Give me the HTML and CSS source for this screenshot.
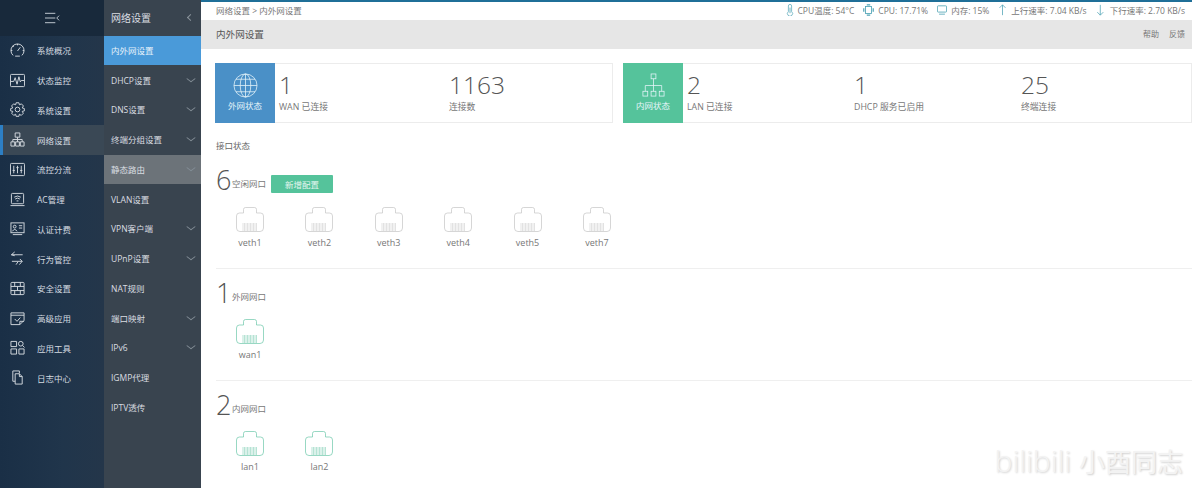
FILE: index.html
```html
<!DOCTYPE html>
<html lang="zh">
<head>
<meta charset="utf-8">
<title>内外网设置</title>
<link rel="stylesheet" href="styles.css">
</head>
<body>
<svg class="defs" width="0" height="0" aria-hidden="true">
  <symbol id="port" viewBox="0 0 28 25">
    <path d="M7.500 6V2.500Q7.500 .5 9.500 .5H18.500Q20.500 .5 20.500 2.500V6H24.500Q27.500 6 27.500 9V21Q27.500 24.500 24 24.500H4Q.5 24.500 .5 21V9Q.5 6 3.500 6Z" fill="none" stroke="currentColor" stroke-width=".7"/>
    <path d="M7 16V24M8.500 16V24M10 16V24M11.500 16V24M13 16V24M14.500 16V24M16 16V24M17.500 16V24M19 16V24M20.500 16V24" stroke="currentColor" stroke-width=".5"/>
  </symbol>
</svg>
<div class="app">
  <nav class="rail">
    <div class="rail-head">
      <svg class="burger" viewBox="0 0 16 12"><path d="M0 1H11M0 6H11M0 11H11M15 3.500L12.500 6L15 8.500" fill="none" stroke="currentColor"/></svg>
    </div>
    <a class="rail-item"><svg class="ico" viewBox="0 0 16 16"><path d="M3.300 13.200A7 7 0 1 1 12.700 13.200M8 8.500L11 4.500M1 8H2.500M13.500 8H15M3 3L4 4M8 1V2.500M5.500 14H10.500" fill="none" stroke="currentColor"/></svg><span>系统概况</span></a>
    <a class="rail-item"><svg class="ico" viewBox="0 0 16 16"><rect x=".5" y="1.500" width="15" height="13" rx="1" fill="none" stroke="currentColor"/><path d="M1 9H4L5.500 5L7.500 12L9.500 4L11 9.500L12 8H15" fill="none" stroke="currentColor"/></svg><span>状态监控</span></a>
    <a class="rail-item"><svg class="ico" viewBox="0 0 16 16"><path d="M6.500 .8H9.500L10 3L12.200 2L14.300 4.200L13 6.300L15.300 7V9.500L13 10L14.200 12L12 14.300L10 13L9.500 15.300H6.500L6 13L4 14.300L1.800 12L3 10L.7 9.500V7L3 6.300L1.700 4.200L3.800 2L6 3Z" fill="none" stroke="currentColor"/><circle cx="8" cy="8" r="2.500" fill="none" stroke="currentColor"/></svg><span>系统设置</span></a>
    <a class="rail-item is-open"><svg class="ico" viewBox="0 0 16 16"><path d="M5.500 1H10.500V5.500H5.500ZM1 10.500H5V15H1ZM6 10.500H10V15H6ZM11 10.500H15V15H11ZM8 5.500V8M3 10.500V8H13V10.500M8 8V10.500" fill="none" stroke="currentColor"/></svg><span>网络设置</span></a>
    <a class="rail-item"><svg class="ico" viewBox="0 0 16 16"><rect x=".5" y="1.500" width="15" height="13" rx="1" fill="none" stroke="currentColor"/><path d="M4 4V12M8 4V12M12 4V12M2.800 9H5.200M6.800 6H9.200M10.800 9H13.200" fill="none" stroke="currentColor"/></svg><span>流控分流</span></a>
    <a class="rail-item"><svg class="ico" viewBox="0 0 16 16"><rect x="1.500" y="1.500" width="13" height="11" rx="1" fill="none" stroke="currentColor"/><path d="M.5 14.500H15.500M4.500 5.500Q8 3 11.500 5.500M5.500 7.500Q8 5.500 10.500 7.500M7 9.500H9" fill="none" stroke="currentColor"/></svg><span>AC管理</span></a>
    <a class="rail-item"><svg class="ico" viewBox="0 0 16 16"><rect x="1" y="2" width="14" height="10.500" fill="none" stroke="currentColor"/><circle cx="5" cy="6" r="1.500" fill="none" stroke="currentColor"/><path d="M2.500 11Q5 7 7.500 11M9.500 5H13M9.500 7.500H13M3 14.500H13" fill="none" stroke="currentColor"/></svg><span>认证计费</span></a>
    <a class="rail-item"><svg class="ico" viewBox="0 0 16 16"><path d="M5 1L1.500 4L5 5M1.500 4H13.500M2 11H13L10.500 8.500M13 11L10 14.500M6.500 14.500L8.500 11.500" fill="none" stroke="currentColor"/></svg><span>行为管控</span></a>
    <a class="rail-item"><svg class="ico" viewBox="0 0 16 16"><rect x="1" y="1.500" width="14" height="13" rx="1" fill="none" stroke="currentColor"/><path d="M1 5.800H15M1 10.200H15M5 1.500V5.800M11 1.500V5.800M8 5.800V10.200M5 10.200V14.500M11 10.200V14.500" fill="none" stroke="currentColor"/></svg><span>安全设置</span></a>
    <a class="rail-item"><svg class="ico" viewBox="0 0 16 16"><path d="M15 10V2H1V14.500H10.500ZM1 4.500H15M10.500 14.500V11H15M5 8.500L7.500 11L11 7" fill="none" stroke="currentColor"/></svg><span>高级应用</span></a>
    <a class="rail-item"><svg class="ico" viewBox="0 0 16 16"><path d="M1 1.500H7V7H1ZM1 9.500H7V15H1ZM9.500 9.500H15V15H9.500Z" fill="none" stroke="currentColor"/><circle cx="11.500" cy="4" r="2.500" fill="none" stroke="currentColor"/><path d="M13.500 6L15.500 8" stroke="currentColor"/></svg><span>应用工具</span></a>
    <a class="rail-item"><svg class="ico" viewBox="0 0 16 16"><path d="M10 3.500V1H3V12H5.500M5.500 4H10L13 7V15H5.500ZM10 4V7H13" fill="none" stroke="currentColor"/></svg><span>日志中心</span></a>
  </nav>
  <nav class="sub">
    <div class="sub-head"><span>网络设置</span><i class="back"></i></div>
    <a class="sub-item is-active"><span>内外网设置</span></a>
    <a class="sub-item"><span>DHCP设置</span><i class="chev"></i></a>
    <a class="sub-item"><span>DNS设置</span><i class="chev"></i></a>
    <a class="sub-item"><span>终端分组设置</span><i class="chev"></i></a>
    <a class="sub-item is-hover"><span>静态路由</span><i class="chev"></i></a>
    <a class="sub-item"><span>VLAN设置</span></a>
    <a class="sub-item"><span>VPN客户端</span><i class="chev"></i></a>
    <a class="sub-item"><span>UPnP设置</span><i class="chev"></i></a>
    <a class="sub-item"><span>NAT规则</span></a>
    <a class="sub-item"><span>端口映射</span><i class="chev"></i></a>
    <a class="sub-item"><span>IPv6</span><i class="chev"></i></a>
    <a class="sub-item"><span>IGMP代理</span></a>
    <a class="sub-item"><span>IPTV透传</span></a>
  </nav>
  <main class="main">
    <header class="topbar">
      <div class="crumb">网络设置 &gt; 内外网设置</div>
      <div class="stats">
        <span class="stat"><svg class="sico s-temp" viewBox="0 0 10 14"><path d="M3 9V2a2 2 0 0 1 4 0V9a3.200 3.200 0 1 1-4 0Z" fill="none" stroke="currentColor" stroke-width=".9"/><path d="M5 4V11" stroke="currentColor"/></svg>CPU温度: 54°C</span>
        <span class="stat"><svg class="sico s-cpu" viewBox="0 0 12 14"><rect x="2.500" y="3" width="7" height="8" fill="none" stroke="currentColor"/><path d="M.5 5V9M11.500 5V9M4 1H8M4 13H8" stroke="currentColor" stroke-width="1.400"/></svg>CPU: 17.71%</span>
        <span class="stat"><svg class="sico s-box" viewBox="0 0 12 12"><rect x=".5" y="1" width="11" height="7.500" rx="1" fill="none" stroke="currentColor"/><path d="M2.500 11H9.500" stroke="currentColor"/></svg>内存: 15%</span>
        <span class="stat"><svg class="sico s-up" viewBox="0 0 10 14"><path d="M5 13V1M1.500 4.500L5 1L8.500 4.500" fill="none" stroke="currentColor" stroke-width=".9"/></svg>上行速率: 7.04 KB/s</span>
        <span class="stat"><svg class="sico s-down" viewBox="0 0 10 14" preserveAspectRatio="xMinYMid"><path d="M5 1V13M1.500 9.500L5 13L8.500 9.500" fill="none" stroke="currentColor" stroke-width=".9"/></svg>下行速率: 2.70 KB/s</span>
      </div>
    </header>
    <div class="titlebar">
      <h1>内外网设置</h1>
      <div class="links"><a>帮助</a><a>反馈</a></div>
    </div>
    <section class="cards">
      <article class="card card-wan">
        <div class="badge badge-blue">
          <svg class="badge-ico" viewBox="0 0 26 26"><g fill="none" stroke="currentColor" stroke-width=".8"><circle cx="13" cy="13" r="12"/><ellipse cx="13" cy="13" rx="5.500" ry="12"/><path d="M13 1V25M1 13H25M3 6.500H23M3 19.500H23"/></g></svg>
          <span>外网状态</span>
        </div>
        <div class="metrics">
          <div class="metric m-wan1"><b>1</b><span>WAN 已连接</span></div>
          <div class="metric"><b>1163</b><span>连接数</span></div>
        </div>
      </article>
      <article class="card card-lan">
        <div class="badge badge-green">
          <svg class="badge-ico" viewBox="0 0 26 26"><g fill="none" stroke="currentColor" stroke-width=".8"><rect x="10.500" y="1" width="5" height="5"/><rect x="2" y="19" width="5" height="5"/><rect x="10.500" y="19" width="5" height="5"/><rect x="19" y="19" width="5" height="5"/><path d="M13 6V19M4.500 19V13H21.500V19"/></g></svg>
          <span>内网状态</span>
        </div>
        <div class="metrics">
          <div class="metric m-lan1"><b>2</b><span>LAN 已连接</span></div>
          <div class="metric m-lan2"><b>1</b><span>DHCP 服务已启用</span></div>
          <div class="metric"><b>25</b><span>终端连接</span></div>
        </div>
      </article>
    </section>
    <h2 class="ports-title">接口状态</h2>
    <section class="group group-free">
      <div class="group-head"><b>6</b><span>空闲网口</span><button class="add">新增配置</button></div>
      <div class="ports ports-free">
        <div class="port"><svg><use href="#port"/></svg><span>veth1</span></div>
        <div class="port"><svg><use href="#port"/></svg><span>veth2</span></div>
        <div class="port"><svg><use href="#port"/></svg><span>veth3</span></div>
        <div class="port"><svg><use href="#port"/></svg><span>veth4</span></div>
        <div class="port"><svg><use href="#port"/></svg><span>veth5</span></div>
        <div class="port"><svg><use href="#port"/></svg><span>veth7</span></div>
      </div>
    </section>
    <section class="group">
      <div class="group-head"><b>1</b><span>外网网口</span></div>
      <div class="ports on">
        <div class="port"><svg><use href="#port"/></svg><span>wan1</span></div>
      </div>
    </section>
    <section class="group">
      <div class="group-head"><b>2</b><span>内网网口</span></div>
      <div class="ports on">
        <div class="port"><svg><use href="#port"/></svg><span>lan1</span></div>
        <div class="port"><svg><use href="#port"/></svg><span>lan2</span></div>
      </div>
    </section>
  </main>
</div>
<div class="mark"><span class="mark-logo">bilibili</span><span class="mark-name">小酉同志</span></div>
</body>
</html>
```

FILE: styles.css
```css
* { box-sizing: border-box; }
html, body { margin: 0; height: 100%; overflow: hidden; }
body {
  font-family: "Open Sans", "Noto Sans CJK SC", sans-serif;
  background: #fff;
  color: #666;
  font-size: 8.5px;
}
.defs { position: absolute; }
a { display: block; }
.app { display: flex; height: 488px; }

.rail {
  width: 104px;
  flex: none;
  background: linear-gradient(90deg, #1a2f46 0%, #20354b 60%, #24364a 100%);
  color: #d5dbe0;
}
.rail-head {
  height: 35.5px;
  background: #18293b;
  display: flex;
  align-items: center;
  justify-content: center;
  padding-left: 1px;
  color: #c9d0d6;
}
.burger { width: 15px; height: 12px; }
.rail-item {
  height: 29.75px;
  display: flex;
  align-items: center;
  padding-left: 10px;
  gap: 12px;
}
.ico { width: 15px; height: 15px; flex: none; stroke-width: 1; }
.rail-item span { white-space: nowrap; }
.rail-item.is-open {
  background: #3a4855;
  border-left: 3px solid #2d7fc4;
  padding-left: 7px;
}

.sub {
  width: 97px;
  flex: none;
  background: #39444f;
  color: #d9dde1;
}
.sub-head {
  height: 35.5px;
  display: flex;
  align-items: center;
  justify-content: space-between;
  padding: 0 8px 1px 7px;
  font-size: 10px;
}
.back {
  width: 5px; height: 5px;
  border-left: 1px solid #8c959d;
  border-bottom: 1px solid #8c959d;
  transform: rotate(45deg);
}
.sub-item {
  height: 29.75px;
  display: flex;
  align-items: center;
  justify-content: space-between;
  padding: 0 7px 1px 7px;
  white-space: nowrap;
}
.chev {
  width: 6px; height: 6px;
  border-right: 1px solid #838d96;
  border-bottom: 1px solid #838d96;
  transform: scale(1.1, .8) rotate(45deg) translate(-1px, -1px);
}
.sub-item.is-active { background: #4a9ad9; color: #e8f3fb; }
.sub-item.is-hover { background: #6c7379; }

.main { flex: 1; min-width: 0; border-top: 2px solid #1f6f98; }
.topbar {
  height: 18px;
  display: flex;
  align-items: center;
  justify-content: space-between;
  padding: 0 7px 2px 15px;
  color: #777;
}
.crumb { white-space: nowrap; }
.stats { display: flex; gap: 9px; }
.stat { display: flex; align-items: center; gap: 4px; white-space: nowrap; }
.sico { height: 12px; color: #4fa3b5; flex: none; }
.s-temp { width: 8px; }
.s-cpu { width: 11px; }
.s-box { width: 10px; }
.s-up { width: 9px; }
.s-down { width: 10px; }

.titlebar {
  height: 29px;
  background: #e6e6e6;
  display: flex;
  align-items: center;
  justify-content: space-between;
  padding: 0 7px 2px 15px;
}
.titlebar h1 { margin: 0; font-size: 9.6px; font-weight: 400; color: #555; }
.links { display: flex; gap: 10px; font-size: 8px; color: #777; }

.cards { display: flex; gap: 10px; padding: 14px 10px 0 14px; }
.card { display: flex; height: 60px; border: 1px solid #ececec; }
.card-wan { width: 398px; }
.card-lan { flex: 1; }
.badge {
  width: 60px;
  flex: none;
  margin: -1px 0 -1px -1px;
  display: flex;
  flex-direction: column;
  align-items: center;
  padding-top: 10px;
  gap: 1px;
  color: #e6f5fa;
}
.badge-blue { background: #4a90c7; }
.badge-green { background: #55c39b; }
.badge-ico { width: 25px; height: 25px; }
.metrics { display: flex; padding-left: 4px; }
.metric { width: 170px; display: flex; flex-direction: column; color: #777; }
.m-lan1, .m-lan2 { width: 167px; }
.metric b {
  font-family: "Open Sans", sans-serif;
  font-weight: 300;
  font-size: 24.5px;
  line-height: 35px;
  margin-top: 3px;
  color: #555;
}
.metric span { font-size: 8.8px; line-height: 11px; white-space: nowrap; }

.ports-title { margin: 17px 0 0 15px; font-size: 8.5px; line-height: 12px; font-weight: 400; color: #666; }
.group { margin: 0 0 0 15px; border-top: 1px solid #efefef; height: 112px; }
.group-free { border-top: 0; margin-top: 10px; height: 106px; }
.group-head { display: flex; align-items: center; height: 36px; margin-top: 6px; }
.group-free .group-head { margin-top: 0; }
.group-head b {
  font-family: "Open Sans", sans-serif;
  font-weight: 300;
  font-size: 27px;
  color: #555;
  line-height: 36px;
  width: 16px;
}
.group-head span { font-size: 8.5px; color: #777; margin-top: 6px; white-space: nowrap; }
.add {
  margin: 7px 0 0 5px;
  width: 62px;
  height: 18px;
  padding: 0;
  border: 0;
  border-radius: 1px;
  background: #55c39b;
  color: #e4f6ef;
  font: inherit;
}
.ports { display: flex; padding-left: 20px; margin-top: 8px; color: #c4c4c4; }
.ports-free { margin-top: 9px; }
.port { width: 69.4px; display: flex; flex-direction: column; align-items: flex-start; }
.port svg { width: 28px; height: 25px; }
.port span { width: 28px; text-align: center; font-size: 9px; line-height: 12px; margin-top: 5px; color: #777; }
.ports.on { color: #6cc7a9; }

.mark {
  position: absolute;
  right: 9px;
  bottom: 7px;
  display: flex;
  align-items: center;
  gap: 8px;
  color: #f3f3f3;
  text-shadow: 1px 1px 2px #cfcfcf;
}
.mark-logo { font-family: "Open Sans", sans-serif; font-size: 30px; font-weight: 300; }
.mark-name { font-family: "Noto Sans CJK SC", sans-serif; font-size: 26px; }
```
